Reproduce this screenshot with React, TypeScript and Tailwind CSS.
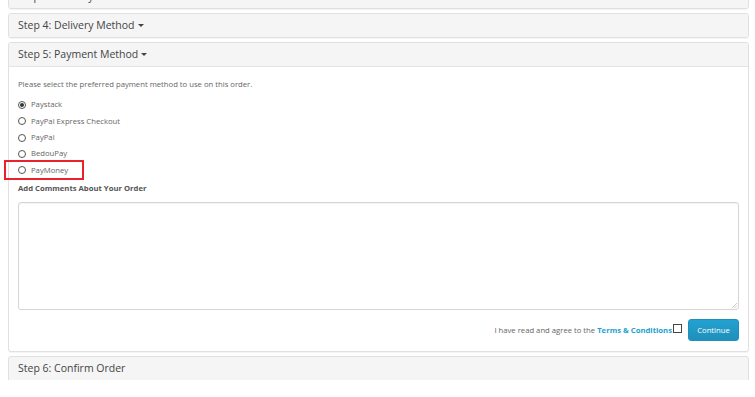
import React from "react";

const font = { fontFamily: '"Open Sans", "Liberation Sans", sans-serif' };

function Caret() {
  return (
    <span className="inline-block ml-[3px] align-middle w-0 h-0 border-l-[3px] border-r-[3px] border-t-[3px] border-l-transparent border-r-transparent border-t-[#444] mb-[1px]" />
  );
}

function Header({ title, caret = true, last = false }: { title: string; caret?: boolean; last?: boolean }) {
  return (
    <div className={`flex items-center px-[9px] bg-[#f5f5f5] text-[#444] text-[10.5px] rounded-t-[3px] ${last ? "h-[23px] rounded-b-[3px]" : "h-[24px] border-b border-[#e3e3e3]"}`}>
      <span>{title}</span>
      {caret && <Caret />}
    </div>
  );
}

function Radio({ label, checked }: { label: string; checked?: boolean }) {
  return (
    <div className="h-[16.3px] flex items-center gap-[5px]">
      <span className="w-[8px] h-[8px] rounded-full border border-[#555] flex items-center justify-center bg-white">
        {checked && <span className="w-[4px] h-[4px] rounded-full bg-[#333]" />}
      </span>
      <span className="text-[7.7px] text-[#666]">{label}</span>
    </div>
  );
}

export default function App() {
  return (
    <div className="w-[755px] h-[397px] overflow-hidden bg-white" style={font}>
      <div className="h-[380px] overflow-hidden pl-[8px] pr-[6px] flex flex-col gap-[4px]">
        <div className="shrink-0 mt-[-16px] border border-[#e0e0e0] rounded-[3px] shadow-[0_1px_1px_rgba(0,0,0,0.05)]">
          <Header title="Step 3: Delivery Details" last />
        </div>
        <div className="shrink-0 border border-[#e0e0e0] rounded-[3px] shadow-[0_1px_1px_rgba(0,0,0,0.05)]">
          <Header title="Step 4: Delivery Method" last />
        </div>
        <div className="shrink-0 h-[310px] border border-[#e0e0e0] rounded-[3px] shadow-[0_1px_1px_rgba(0,0,0,0.05)] flex flex-col bg-white">
          <Header title="Step 5: Payment Method" />
          <div className="flex-1 px-[9px] pt-[12px] flex flex-col">
            <p className="text-[7.7px] text-[#666] leading-[10px]">
              Please select the preferred payment method to use on this order.
            </p>
            <div className="mt-[8px] flex flex-col">
              <Radio label="Paystack" checked />
              <Radio label="PayPal Express Checkout" />
              <Radio label="PayPal" />
              <Radio label="BedouPay" />
              <div className="relative">
                <Radio label="PayMoney" />
                <div className="absolute left-[-14px] top-[-2px] w-[80px] h-[20px] border-2 border-[#e8232b]" />
              </div>
            </div>
            <p className="mt-[5px] text-[7.7px] font-bold text-[#555] leading-[10px]">Add Comments About Your Order</p>
            <div className="mt-[9px] h-[108px] border border-[#d5d5d5] rounded-[3px] relative shadow-[inset_0_1px_1px_rgba(0,0,0,0.05)]">
              <svg className="absolute right-[1px] bottom-[1px]" width="6" height="6" viewBox="0 0 6 6">
                <path d="M6 1 L1 6 M6 3.5 L3.5 6" stroke="#bbb" strokeWidth="0.8" />
              </svg>
            </div>
            <div className="mt-[9px] flex items-center justify-end">
              <span className="text-[7.7px] text-[#666]">
                I have read and agree to the <span className="font-bold text-[#23a1d1]">Terms &amp; Conditions</span>
              </span>
              <span className="ml-[1px] w-[9px] h-[9px] border border-[#444] bg-white mb-[3px]" />
              <button className="ml-[6px] w-[51px] h-[22px] rounded-[3px] text-white text-[7.7px] bg-gradient-to-b from-[#23a1d1] to-[#1f90bb] border border-[#1f90bb]">
                Continue
              </button>
            </div>
          </div>
        </div>
        <div className="shrink-0 border border-[#e0e0e0] rounded-[3px] h-[40px] bg-[#f5f5f5]">
          <Header title="Step 6: Confirm Order" caret={false} last />
        </div>
      </div>
    </div>
  );
}
